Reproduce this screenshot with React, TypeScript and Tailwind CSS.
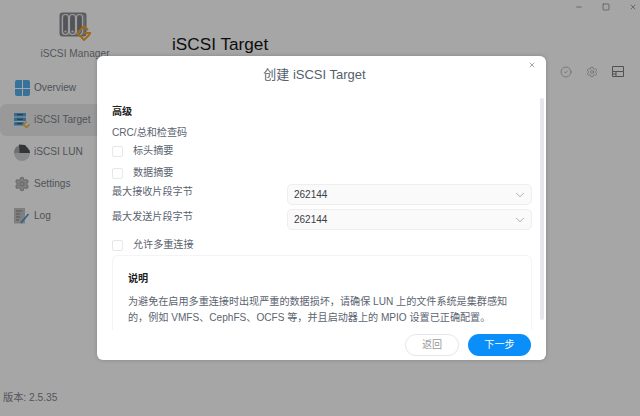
import React from "react";
import { ChevronDown, X, Minus, Square, CircleCheck, Settings } from "lucide-react";

const font = { fontFamily: '"Liberation Sans", "Noto Sans CJK SC", sans-serif' };

function Logo() {
  return (
    <svg width="33" height="29" viewBox="0 0 33 29" className="block">
      <rect x="0.5" y="0.5" width="27" height="24" rx="3" fill="#8a8d92" />
      <rect x="2" y="2" width="24" height="21" rx="2" fill="#9ea0a4" />
      {[3.5, 10.5, 17.5].map((x) => (
        <g key={x}>
          <rect x={x} y="2.5" width="6" height="20" rx="3" fill="#7f8287" stroke="#f2f2f2" strokeWidth="1.2" />
          <circle cx={x + 3} cy="19.5" r="1.1" fill="#f2f2f2" />
        </g>
      ))}
      <path d="M25 14 L18.5 21 L25 28 L31 22 M25 21 H32" fill="none" stroke="#f0a22e" strokeWidth="2" />
      <path d="M25 14 L29 18" fill="none" stroke="#f0a22e" strokeWidth="2" />
    </svg>
  );
}

function OverviewIcon() {
  return (
    <div className="grid h-[16px] w-[15px] grid-cols-2 gap-px">
      <div className="rounded-tl-[2px] bg-[#55b0ee]" />
      <div className="rounded-tr-[2px] bg-[#55b0ee]" />
      <div className="rounded-bl-[2px] bg-[#55b0ee]" />
      <div className="rounded-br-[2px] bg-[#55b0ee]" />
    </div>
  );
}

function TargetIcon() {
  return (
    <svg width="16" height="16" viewBox="0 0 16 16">
      <rect x="0" y="1" width="12" height="3.5" rx="0.5" fill="#4fa5e2" />
      <rect x="0" y="5.5" width="12" height="3.5" rx="0.5" fill="#4fa5e2" />
      <rect x="0" y="10" width="10" height="3.5" rx="0.5" fill="#4fa5e2" />
      <path d="M3 2.7H9M3 7.2H9M3 11.7H8" stroke="#2e3a48" strokeWidth="0.8" />
      <path d="M12.5 9.5 L9.5 12.5 L12.5 15.5 L15.5 12.5" fill="none" stroke="#f5ae3c" strokeWidth="1.5" />
    </svg>
  );
}

function LunIcon() {
  return (
    <svg width="16" height="17" viewBox="0 0 16 17">
      <circle cx="8" cy="9" r="8" fill="#d2d4d6" />
      <path d="M0 9 A8 8 0 0 1 5 1.5 L5.5 9 Z" fill="#a9acb0" />
      <path d="M5 0.5 L11 1 L15.5 6.5 L16 9 L5.5 9 Z" fill="#4e5358" />
    </svg>
  );
}

function LogIcon() {
  return (
    <svg width="16" height="16" viewBox="0 0 16 16">
      <rect x="0" y="0" width="11" height="15.5" fill="#c4c4c4" />
      <path d="M2 3H8M2 6H6M2 9H6M2 12H5" stroke="#858585" strokeWidth="1" />
      <path d="M7 15 L14.5 6" stroke="#3f97d6" strokeWidth="1.6" />
    </svg>
  );
}

function ListIcon() {
  return (
    <svg width="12" height="12" viewBox="0 0 12 12" fill="none" stroke="#7d7d7d" strokeWidth="1">
      <path d="M0.5 0.5H11.5V5.5H0.5Z M0.5 5.5V10.5H11.5V5.5 M4 5.5V10.5 M0.5 8H4" />
    </svg>
  );
}

const nav = [
  { label: "Overview", icon: <OverviewIcon /> },
  { label: "iSCSI Target", icon: <TargetIcon />, active: true },
  { label: "iSCSI LUN", icon: <LunIcon /> },
  { label: "Settings", icon: <Settings size={16} className="text-[#a8a8a8]" fill="#c6c6c6" /> },
  { label: "Log", icon: <LogIcon /> },
];

function Checkbox({ label, className = "" }: { label: string; className?: string }) {
  return (
    <div className={`flex items-center ${className}`}>
      <div className="h-[11px] w-[11px] rounded-[2px] border border-[#e5e7eb] bg-white" />
      <span className="ml-[10px] text-[10.1px] leading-[14px] text-[#5b6470]">{label}</span>
    </div>
  );
}

function SelectRow({ label, className = "" }: { label: string; className?: string }) {
  return (
    <div className={`flex items-center ${className}`}>
      <span className="w-[175px] -translate-y-[3px] text-[10.1px] leading-[14px] text-[#5b6470]">{label}</span>
      <div className="flex h-[21px] w-[245px] items-center justify-between rounded-[5px] border border-[#eeeeee] bg-[#fafafa] pl-[6px] pr-[4px]">
        <span className="text-[10px] text-[#3a3f46]">262144</span>
        <ChevronDown size={14} className="text-[#777]" strokeWidth={1} />
      </div>
    </div>
  );
}

export default function App() {
  return (
    <div style={font} className="relative h-[416px] w-[640px] overflow-hidden bg-white">
      <div className="flex h-full">
        <aside className="flex w-[150px] shrink-0 flex-col bg-white">
          <div className="flex flex-col items-center pt-[12px]">
            <Logo />
            <span className="mt-[7px] whitespace-nowrap text-[10.2px] leading-[12px] text-[#7f858c]">iSCSI Manager</span>
          </div>
          <nav className="mt-[12px] flex flex-col">
            {nav.map((n) => (
              <div
                key={n.label}
                className={`flex h-[32px] items-center gap-[4px] rounded-l-[6px] pl-[14px] ${n.active ? "bg-[#ececec]" : ""}`}
              >
                <div className="flex w-[16px] justify-center">{n.icon}</div>
                <span className="whitespace-nowrap text-[10.1px] text-[#79818a]">{n.label}</span>
              </div>
            ))}
          </nav>
          <div className="mt-auto pb-[12px] pl-[3px] text-[10.2px] leading-[12px] text-[#7f858c]">版本: 2.5.35</div>
        </aside>
        <main className="flex-1 bg-white">
          <div className="flex justify-end gap-[19px] pr-[3px] pt-[3px] text-[#777]">
            <Minus size={8} />
            <Square size={8} />
            <X size={8} />
          </div>
          <h1 className="mt-[21px] pl-[22px] text-[17.2px] font-normal leading-[24px] text-[#151515]">iSCSI Target</h1>
          <div className="mt-[10px] flex justify-end gap-[14px] pr-[16px] text-[#7d7d7d]">
            <CircleCheck size={12} strokeWidth={1} />
            <Settings size={12} strokeWidth={1} />
            <ListIcon />
          </div>
        </main>
      </div>

      <div className="absolute inset-0 bg-black/35" />

      <div className="absolute left-[97px] top-[56px] flex h-[304px] w-[449px] flex-col rounded-[6px] bg-white shadow-[0_0_4px_rgba(0,0,0,0.2)]">
        <button className="absolute right-[10px] top-[5px] text-[#777]"><X size={8} /></button>
        <div className="absolute right-[2px] top-[42px] h-[222px] w-[4px] rounded-[2px] bg-[#e5e7eb]" />
        <h2 className="pr-[14px] pt-[11px] text-center text-[13px] font-normal leading-[16px] text-[#555f6b]">创建 iSCSI Target</h2>
        <div className="h-[247px] overflow-hidden pl-[15px] pr-[14px] pt-[22px]">
          <div className="text-[10.1px] font-bold leading-[14px] text-[#222]">高级</div>
          <div className="mt-[7px] text-[10.1px] leading-[14px] text-[#5b6470]">CRC/总和检查码</div>
          <Checkbox label="标头摘要" className="mt-[4px]" />
          <Checkbox label="数据摘要" className="mt-[8px]" />
          <SelectRow label="最大接收片段字节" className="mt-[4px]" />
          <SelectRow label="最大发送片段字节" className="mt-[4px]" />
          <Checkbox label="允许多重连接" className="mt-[8px]" />
          <div className="mt-[3px] h-[90px] rounded-t-[6px] border border-[#f3f4f6] px-[15px] pt-[16px]">
            <div className="text-[10.1px] font-bold leading-[14px] text-[#222]">说明</div>
            <p className="mt-[8px] whitespace-nowrap text-[10.1px] leading-[16px] text-[#5b6470]">
              为避免在启用多重连接时出现严重的数据损坏，请确保 LUN 上的文件系统是集群感知
              <br />
              的，例如 VMFS、CephFS、OCFS 等，并且启动器上的 MPIO 设置已正确配置。
            </p>
          </div>
        </div>
        <div className="flex justify-end gap-[9px] pr-[15px] pt-[4px]">
          <button className="h-[22px] w-[54px] rounded-full border border-[#e5e7eb] text-[10.1px] text-[#9a9a9a]">返回</button>
          <button className="h-[22px] w-[63px] rounded-full bg-[#0a8ffa] text-[10.1px] text-white">下一步</button>
        </div>
      </div>
    </div>
  );
}
